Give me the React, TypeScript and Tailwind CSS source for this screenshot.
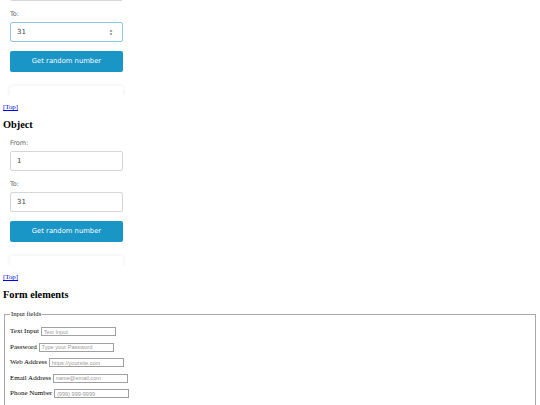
const Spinner = () => (
    <svg width="4" height="7" viewBox="0 0 4 7" className="text-[#555]">
        <path d="M0.5 2.6 L2 1 L3.5 2.6 Z" fill="currentColor" />
        <path d="M0.5 4.4 L2 6 L3.5 4.4 Z" fill="currentColor" />
    </svg>
);

// scrolledPast: the top of this widget sits above the window, so its first row is left empty
const Widget = ({ focused = false, scrolledPast = false, className = "" }) => {
    const labelStyles = `h-[8px] leading-[8px] text-[6.5px] text-[#5f5f5f]`;
    const inputStyles = `flex items-center justify-between h-[20px] w-[113px] rounded-[2px] border bg-white pl-[6px] pr-[9px] text-[7px] text-[#444]`;

    return (
        <div className={`h-[130px] w-[130px] overflow-hidden pl-[7px] pt-[4px] font-['DejaVu_Sans',sans-serif] ${className}`}>
            <div className={labelStyles}>{scrolledPast ? "" : "From:"}</div>
            <div className={`${inputStyles} mt-[4px] border-[#d6d6d6]`}>{scrolledPast ? "" : "1"}</div>

            <div className={`${labelStyles} mt-[9px]`}>To:</div>
            <div className={`${inputStyles} mt-[4px] ${focused ? "border-[#8cc6df]" : "border-[#d6d6d6]"}`}>
                <span>31</span>
                {focused && <Spinner />}
            </div>

            <button className="mt-[9px] flex h-[21px] w-[113px] items-center justify-center rounded-[2px] bg-[#1995c6] text-[6.8px] text-white">
                Get random number
            </button>

            <div className="mt-[14px] h-[40px] w-[113px] rounded-[2px] bg-white shadow-[0_0_5px_rgba(0,0,0,0.09)]" />
        </div>
    );
};

const TopLink = () => (
    <p className="mt-[8px] h-[8px] leading-[8px] text-[6.8px]">
        <a href="#top" className="text-[#0000ee] underline">[Top]</a>
    </p>
);

const Heading = ({ children }) => (
    <h2 className="mt-[8px] h-[12px] leading-[12px] text-[10.3px] font-bold text-black">{children}</h2>
);

const fields = [
    { label: "Text Input", placeholder: "Text Input" },
    { label: "Password", placeholder: "Type your Password" },
    { label: "Web Address", placeholder: "https://yoursite.com" },
    { label: "Email Address", placeholder: "name@email.com" },
    { label: "Phone Number", placeholder: "(999) 999-9999" },
];

export default function App() {
    return (
        <div className="h-[405px] w-full overflow-hidden bg-white px-[3px] font-['Liberation_Serif',serif] text-black">
            {/* first widget, scrolled past its top */}
            <Widget focused scrolledPast className="-mt-[35px]" />

            <TopLink />
            <Heading>Object</Heading>
            <Widget className="mt-[4px]" />

            <TopLink />
            <Heading>Form elements</Heading>

            <fieldset className="mx-[1px] mt-[9px] h-[120px] border border-[#a9a9a9] pl-[5px] pr-[5px]">
                <legend className="px-[1px] text-[6.6px] leading-[8px] text-[#111]">Input fields</legend>
                <div className="mt-[9px] flex flex-col gap-[6.5px]">
                    {fields.map((field) => (
                        <label key={field.label} className="flex h-[9px] items-center text-[7px] leading-[9px] text-black">
                            <span className="whitespace-pre">{field.label} </span>
                            <input
                                type="text"
                                placeholder={field.placeholder}
                                className="h-[9px] w-[75px] border border-[#a0a0a0] bg-white px-[2px] font-['Liberation_Sans',sans-serif] text-[5.6px] leading-[7px] placeholder:text-[#9a9a9a]"
                            />
                        </label>
                    ))}
                </div>
            </fieldset>
        </div>
    );
}
